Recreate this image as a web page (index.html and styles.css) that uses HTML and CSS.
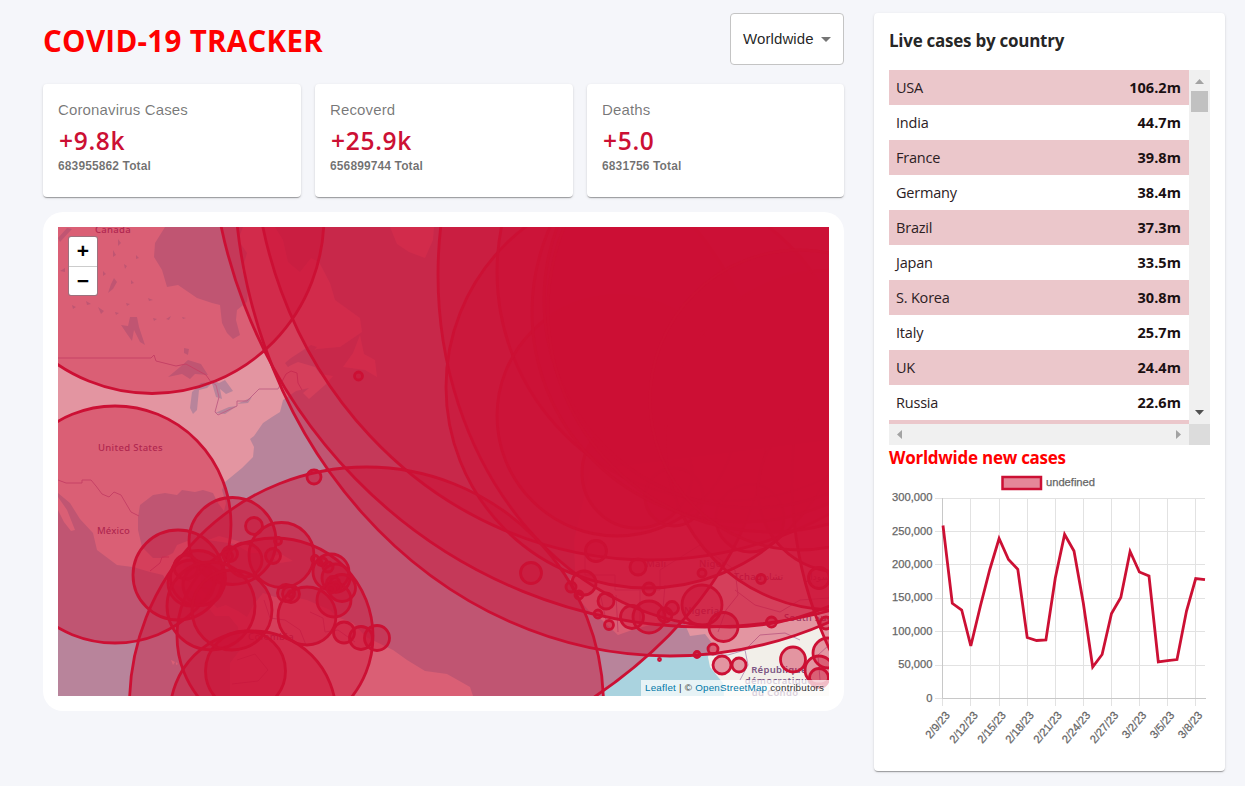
FILE: index.html
```html
<!DOCTYPE html>
<html lang="en">
<head>
<meta charset="utf-8">
<title>COVID-19 Tracker</title>
<link rel="stylesheet" href="styles.css">
</head>
<body>
<div class="app">
  <main class="left">
    <header class="header">
      <h1>COVID-19 TRACKER</h1>
      <div class="select"><span>Worldwide</span><svg width="10" height="5" viewBox="0 0 10 5"><path d="M0 0h10l-5 5z" fill="#757575"/></svg></div>
    </header>
    <section class="stats">
      <div class="card stat"><p class="stat-title">Coronavirus Cases</p><h2>+9.8k</h2><p class="stat-total">683955862 Total</p></div>
      <div class="card stat"><p class="stat-title">Recoverd</p><h2>+25.9k</h2><p class="stat-total">656899744 Total</p></div>
      <div class="card stat"><p class="stat-title">Deaths</p><h2>+5.0</h2><p class="stat-total">6831756 Total</p></div>
    </section>
    <section class="map-card">
      <div class="map">
        <svg class="map-svg" width="771" height="469" viewBox="58 227 771 469">
          <g class="land">
            <path d="M58 227H165L155 243 154 257 162 270 167 287 178 285 197 298 212 303 220 305 222 323 227 333 233 339 240 335 236 320 237 310 247 302 248 290 242 270 247 253 238 240 243 227H275L283 240 288 262 300 272 311 258 319 262 330 283 335 300 360 318 362 332 340 347 317 349 300 356 287 367 298 362 315 367 320 374 333 376 325 385 309 399 303 393 309 388 296 391 283 400 280 412 272 417 263 423 254 436 250 439 254 447 253 457 242 468 225 482 222 490 226 503 224 511 218 503 213 493 203 490 195 492 182 490 177 495 165 493 153 495 140 505 138 517 138 530 142 547 153 558 163 558 173 553 177 545 190 540 187 557 183 567 200 570 202 590 210 600 217 608 226 605 238 611 247 617 254 604 263 593 275 597 290 596 307 600 330 610 337 617 353 623 366 637 393 650 407 660 425 671 447 674 470 687 473 696H230L230 663 240 650 238 627 229 616 215 616 197 593 167 582 163 575 150 572 133 567 117 565 97 550 93 533 80 519 70 503 58 493Z"/>
            <path d="M58 497L67 510 75 530 71 531 64 522 58 510ZM360 335L353 353 343 367 365 370 377 377 375 360 364 354ZM208 540L219 536 238 541 250 547 263 553 250 553 235 544ZM271 557L281 554 293 561 280 563ZM390 227L397 244 409 252 425 258 433 240 434 227ZM171 660l4 2-2 3zM176 662l2 2-2 1z"/>
            <path d="M590 470L574 540 575 572 568 582 576 596 590 612 602 620 618 635 632 630 660 622 684 622 690 636 705 634 712 643 708 657 710 667 723 683 724 696H829V440Z"/>
          </g>
          <path class="water" d="M168 377L180 367 188 360 201 364 208 375 195 374 190 379 182 374ZM192 392L201 383 213 382 207 388 199 390 197 410 193 414 190 408ZM211 380L219 383 225 380 233 391 226 394 220 389 222 399 216 397ZM215 413L229 407 237 406 225 414ZM237 404L252 397 248 403ZM130 317L137 317 139 327 145 345 140 342 134 330 132 341 127 334 121 325 128 326ZM184 348L189 349 188 355 184 353ZM114 278L117 282 113 289 108 293 111 284ZM58 238L67 228 72 229 60 242ZM60 271l5-3 0 4zM98 307l6 4-3 3zM113 250l3 5-3 2zM92 255l4 3-3 2zM118 239l3 4-3 3zM148 298l5 2-4 1zM166 319l5-3-2 4zM72 305l4 2-3 2zM86 301l5 3-4 1zM83 285l4 3-3 1zM103 271l3 3-3 2zM124 264l3 2-2 3zM136 255l3 3-3 1zM131 280l3 3-3 1zM126 303l4 1-3 2zM153 318l4 1-3 2zM182 317l4 1-3 1zM115 312l4 1-3 2zM285 363l6-5 20-13 6 2-7 8-12 4-10 8z"/>
          <path class="border" d="M58 358H151L154 355 156 361 176 366 186 364 206 375 211 382 216 385 219 397 215 412 218 415 237 406 237 401 247 401 259 389H278L286 374 291 371 297 373 298 383 302 390M58 480L66 483 82 483 82 480 91 480 96 486 102 494 109 497 114 492 121 495 131 512 139 516M150 571L160 563 162 557 169 557M183 578L191 582M197 587L210 589M264 600L270 618 285 620 300 630 306 645 320 641M237 660L255 654 268 670 258 681 232 684M310 612L323 618 325 632 338 630 355 642M585 555V575H615V590H660V570L700 545M600 593L606 620M616 595L618 632M640 590V625M665 585L662 620M700 545L735 570 738 595 726 610 718 632M735 590L755 605 780 612 800 600 829 598M705 655L728 655 745 650 748 665 740 680M745 650L760 635 785 633 800 640M829 645L818 655 820 680"/>
          <g class="labels">
            <text x="95" y="233" textLength="36">Canada</text><text x="98" y="451" textLength="65">United States</text><text x="97" y="533.5" textLength="33">México</text><text x="248" y="640" textLength="46">Colombia</text><text x="646" y="567">Mali</text><text x="699" y="567">Niger</text><text x="684" y="614">Nigeria</text><text x="734" y="580">Tchad تشاد</text><text x="803" y="580">السودان</text><text x="784" y="621">South Sudan</text>
            <g text-anchor="middle" font-weight="600"><text x="779" y="673">République</text><text x="779" y="684">démocratique</text><text x="775" y="696">du Congo</text></g>
          </g>
          <g class="cases">
            <ellipse cx="141" cy="417" rx="626" ry="406"/><ellipse cx="705" cy="119" rx="495" ry="508"/><ellipse cx="670" cy="165.500" rx="436" ry="490.500"/><ellipse cx="650" cy="135" rx="396.500" ry="425"/><ellipse cx="730" cy="275" rx="292" ry="352"/>
            <circle cx="647" cy="387" r="201"/><circle cx="726" cy="272" r="229"/><circle cx="617" cy="416" r="120"/><circle cx="637" cy="473" r="55"/><circle cx="750" cy="518" r="34"/><circle cx="674" cy="497" r="29"/><circle cx="835" cy="440" r="170"/><circle cx="840" cy="490" r="82"/><circle cx="1193" cy="480" r="401"/>
            <circle cx="742" cy="312" r="210"/><circle cx="752" cy="300" r="208"/><circle cx="770" cy="310" r="222"/><circle cx="800" cy="400" r="150"/>
            <ellipse cx="152" cy="216.500" rx="172" ry="177"/><ellipse cx="115" cy="524.500" rx="116" ry="118.500"/><ellipse cx="366.500" cy="705" rx="237" ry="238"/><circle cx="275" cy="636" r="98"/><circle cx="253" cy="714" r="83"/><circle cx="245.500" cy="671" r="40"/>
            <circle cx="232.500" cy="541" r="43.500"/><circle cx="178" cy="575" r="45"/><circle cx="198" cy="578" r="27.500"/><circle cx="191" cy="583" r="23"/><circle cx="186" cy="567" r="12"/><circle cx="203" cy="585" r="20"/><circle cx="211" cy="606" r="44"/><circle cx="232" cy="610" r="40"/><circle cx="281.500" cy="555" r="32.500"/><circle cx="307" cy="616" r="29"/><circle cx="254" cy="526" r="8.500"/><circle cx="230" cy="554" r="7.500"/><circle cx="228" cy="556" r="4.500"/><circle cx="278" cy="541" r="3.500"/><circle cx="273" cy="556" r="7.500"/><circle cx="245" cy="560" r="17"/><circle cx="286" cy="593" r="8.500"/><circle cx="291" cy="594" r="8.500"/><circle cx="291" cy="594" r="3"/>
            <circle cx="331" cy="572" r="18"/><circle cx="336" cy="578" r="14"/><circle cx="342" cy="588" r="13.500"/><circle cx="334" cy="600" r="17"/><circle cx="315" cy="559" r="3.500"/><circle cx="323" cy="562" r="4"/><circle cx="328" cy="567" r="5"/><circle cx="333" cy="583" r="6.500"/><circle cx="336" cy="587" r="5"/><circle cx="331" cy="589" r="4"/><circle cx="320" cy="563" r="2"/><circle cx="344" cy="632.500" r="10.500"/><circle cx="361" cy="638" r="11.500"/><circle cx="377" cy="638" r="12.500"/><circle cx="314" cy="477" r="7"/><circle cx="358.500" cy="376" r="4"/>
            <circle cx="531" cy="573" r="10.500"/><circle cx="596" cy="551" r="10.500"/><circle cx="584" cy="583" r="12"/><circle cx="571" cy="587" r="5"/><circle cx="579" cy="595" r="4"/><circle cx="606" cy="601" r="8"/><circle cx="598" cy="614" r="4"/><circle cx="609" cy="625" r="4.500"/><circle cx="632" cy="617" r="11.500"/><circle cx="638" cy="567" r="8"/><circle cx="649" cy="617" r="16"/><circle cx="649" cy="589" r="6"/><circle cx="672" cy="608" r="6.500"/><circle cx="665" cy="615" r="7"/><circle cx="702" cy="605" r="20"/><circle cx="702" cy="573" r="4"/><circle cx="723.500" cy="627" r="14.500"/><circle cx="761" cy="579" r="4.500"/><circle cx="819" cy="578" r="10.500"/><circle cx="771.500" cy="622" r="5"/><circle cx="826" cy="623" r="6"/><circle cx="713" cy="649" r="5"/><circle cx="697" cy="654.500" r="3"/><circle cx="659.500" cy="659.500" r="1"/><circle cx="722" cy="665" r="9"/><circle cx="739" cy="665" r="7"/><circle cx="793" cy="659.500" r="12.500"/><circle cx="828" cy="653" r="15"/><circle cx="819" cy="670" r="14"/><circle cx="819" cy="678" r="9.500"/>
          </g>
        </svg>
        <div class="zoom"><span>+</span><span>−</span></div>
        <div class="attribution"><a>Leaflet</a> | © <a>OpenStreetMap</a> contributors</div>
      </div>
    </section>
  </main>
  <aside class="card right">
    <h3>Live cases by country</h3>
    <div class="table-box">
      <div class="rows">
        <div class="row"><span>USA</span><b>106.2m</b></div>
        <div class="row"><span>India</span><b>44.7m</b></div>
        <div class="row"><span>France</span><b>39.8m</b></div>
        <div class="row"><span>Germany</span><b>38.4m</b></div>
        <div class="row"><span>Brazil</span><b>37.3m</b></div>
        <div class="row"><span>Japan</span><b>33.5m</b></div>
        <div class="row"><span>S. Korea</span><b>30.8m</b></div>
        <div class="row"><span>Italy</span><b>25.7m</b></div>
        <div class="row"><span>UK</span><b>24.4m</b></div>
        <div class="row"><span>Russia</span><b>22.6m</b></div>
        <div class="row"></div>
      </div>
      <div class="vbar"><svg width="9" height="5"><path d="M4.500 0L9 5H0z" fill="#a3a3a3"/></svg><i class="thumb"></i><svg class="end" width="9" height="5"><path d="M0 0h9L4.500 5z" fill="#505050"/></svg></div>
      <div class="hbar"><svg width="5" height="9"><path d="M5 0v9L0 4.500z" fill="#a3a3a3"/></svg><svg width="5" height="9"><path d="M0 0v9l5-4.500z" fill="#a3a3a3"/></svg></div>
      <div class="corner"></div>
    </div>
    <h3 class="red">Worldwide new cases</h3>
    <svg class="chart" width="321" height="280" viewBox="889 472 321 280">
      <rect x="1002.500" y="477" width="38.500" height="12" fill="#e58799" stroke="#cc1034" stroke-width="2.500"/>
      <text x="1046" y="486" textLength="49">undefined</text>
      <path class="grid" d="M935 498.500h270M935 531.500h270M935 564.500h270M935 598.500h270M935 631.500h270M935 665.500h270M970.500 498v208M999.500 498v208M1027.500 498v208M1055.500 498v208M1083.500 498v208M1111.500 498v208M1139.500 498v208M1167.500 498v208M1195.500 498v208M935 698.500h8M942.500 698v8"/>
      <path class="axis" d="M942.500 498v200.500H1206"/>
      <g text-anchor="end"><text x="932.500" y="501">300,000</text><text x="932.500" y="535">250,000</text><text x="932.500" y="568">200,000</text><text x="932.500" y="601">150,000</text><text x="932.500" y="635">100,000</text><text x="932.500" y="668">50,000</text><text x="932.500" y="702">0</text></g>
      <g text-anchor="end" class="dates">
        <text transform="translate(950.500 715.500) rotate(-50)">2/9/23</text><text transform="translate(978.500 715.500) rotate(-50)">2/12/23</text><text transform="translate(1006.500 715.500) rotate(-50)">2/15/23</text><text transform="translate(1034.500 715.500) rotate(-50)">2/18/23</text><text transform="translate(1062.500 715.500) rotate(-50)">2/21/23</text><text transform="translate(1091 715.500) rotate(-50)">2/24/23</text><text transform="translate(1119 715.500) rotate(-50)">2/27/23</text><text transform="translate(1147 715.500) rotate(-50)">3/2/23</text><text transform="translate(1175 715.500) rotate(-50)">3/5/23</text><text transform="translate(1203 715.500) rotate(-50)">3/8/23</text>
      </g>
      <polyline class="line" points="943,525.500 952.300,603.300 961.700,610 970.800,646 980.400,606 989.800,569.500 999.100,538.500 1008.500,559.500 1017.800,569.300 1027.200,637.500 1036.600,640.500 1045.900,640 1055.300,578 1064.600,534.500 1074,551 1083.300,603 1092.700,667 1102.100,654.500 1111.500,613.500 1120.800,597.500 1130.100,551.500 1139.400,572 1149,576 1158.300,662 1167.600,660.700 1177,659.600 1186.500,611 1195.700,578.500 1205,579.700"/>
    </svg>
  </aside>
</div>
</body>
</html>
```
FILE: styles.css
```css
* { box-sizing: border-box; margin: 0; }
body { background: #f5f6fa; font-family: "Liberation Sans", Arial, sans-serif; width: 1245px; height: 786px; overflow: hidden; }
h1, h2, h3, .row { font-family: "Open Sans", "Noto Sans", sans-serif; }
.app { display: flex; gap: 30px; padding: 13px 20px 0 43px; align-items: flex-start; }
.left { width: 801px; }
.header { display: flex; justify-content: space-between; height: 52px; align-items: center; }
h1 { color: red; font-size: 29.500px; font-weight: 700; line-height: 40px; padding-top: 3px; letter-spacing: .3px; }
.select { width: 114px; height: 52px; border: 1px solid #c4c4c4; border-radius: 4px; background: #fff; display: flex; align-items: center; justify-content: space-between; padding: 0 12px; font-size: 15px; color: rgba(0,0,0,.87); letter-spacing: .1px; }
.select span { padding-bottom: 1px; }
.stats { display: grid; grid-template-columns: 258px 258px 257px; gap: 14px; margin-top: 19px; }
.card { background: #fff; border-radius: 4px; box-shadow: 0 2px 1px -1px rgba(0,0,0,.2), 0 1px 1px rgba(0,0,0,.14), 0 1px 3px rgba(0,0,0,.12); }
.stat { height: 113px; padding: 15px 15px; }
.stat-title { color: rgba(0,0,0,.54); font-size: 15px; line-height: 22px; letter-spacing: .14px; }
.stat h2 { color: #cc1034; font-size: 24.500px; font-weight: 600; line-height: 32px; margin-top: 4px; padding-left: 1px; letter-spacing: .7px; }
.stat-total { color: rgba(0,0,0,.56); font-weight: 700; font-size: 12px; line-height: 16px; padding-top: 1px; letter-spacing: .12px; }
.map-card { margin-top: 15px; height: 499px; padding: 15px; background: #fff; border-radius: 20px; }
.map { position: relative; width: 771px; height: 469px; overflow: hidden; background: #aad3df; }
.map-svg { display: block; }
.land { fill: #f2efe9; }
.water { fill: #aad3df; }
.border { fill: none; stroke: #b99bbd; stroke-width: 1; }
.labels { font: 500 9.500px "Noto Sans", "DejaVu Sans", sans-serif; fill: #7b5583; stroke: #f2efe9; stroke-width: 1px; stroke-opacity: .5; paint-order: stroke; letter-spacing: .3px; }
.cases { fill: #cc1034; fill-opacity: .4; stroke: #cc1034; stroke-width: 2.800; }
.zoom { position: absolute; left: 10px; top: 9px; width: 30px; height: 60px; border: 1px solid rgba(90,20,40,.6); border-radius: 3px; background: #fff; font: 700 21px/27px "Liberation Sans", sans-serif; text-align: center; }
.zoom span { display: block; height: 29px; }
.zoom span:first-child { border-bottom: 1px solid #ccc; height: 30px; }
.attribution { position: absolute; right: 0; bottom: 0; height: 16px; width: 188px; padding-left: 4px; font-size: 9.800px; line-height: 15px; letter-spacing: .23px; white-space: nowrap; color: #333; background: rgba(255,255,255,.72); }
.attribution a { color: #0078a8; }
.right { width: 351px; height: 758px; padding: 15px; }
h3 { font-size: 17px; font-weight: 700; line-height: 26px; letter-spacing: -.26px; color: rgba(0,0,0,.87); }
.table-box { display: grid; grid-template-columns: 300px 21px; grid-template-rows: 354px 21px; margin-top: 16px; }
.rows { overflow: hidden; }
.row { height: 35px; display: flex; justify-content: space-between; align-items: center; padding: 0 8px 0 7px; font-size: 14.500px; color: #2b2023; }
.row span { letter-spacing: -.2px; }
.row b { color: #1a1012; letter-spacing: .05px; }
.row:nth-child(odd) { background: #ebc7cb; }
.vbar { background: #f0f0f0; display: flex; flex-direction: column; align-items: center; padding: 9px 0 9px; }
.thumb { width: 17px; height: 21px; background: #c1c1c1; margin-top: 7px; }
.end { margin-top: auto; }
.hbar { background: #f0f0f0; display: flex; align-items: center; justify-content: space-between; padding: 0 8px; }
.corner { background: #dcdcdc; }
.red { color: red; }
.chart { display: block; margin-top: 1px; font: 11.200px "Liberation Sans", sans-serif; fill: #666; }
.chart text { stroke: #666; stroke-width: .25px; }
.grid { stroke: #e2e2e2; fill: none; }
.axis { stroke: #c8c8c8; fill: none; }
.line { fill: none; stroke: #cc1034; stroke-width: 2.800; }
```
